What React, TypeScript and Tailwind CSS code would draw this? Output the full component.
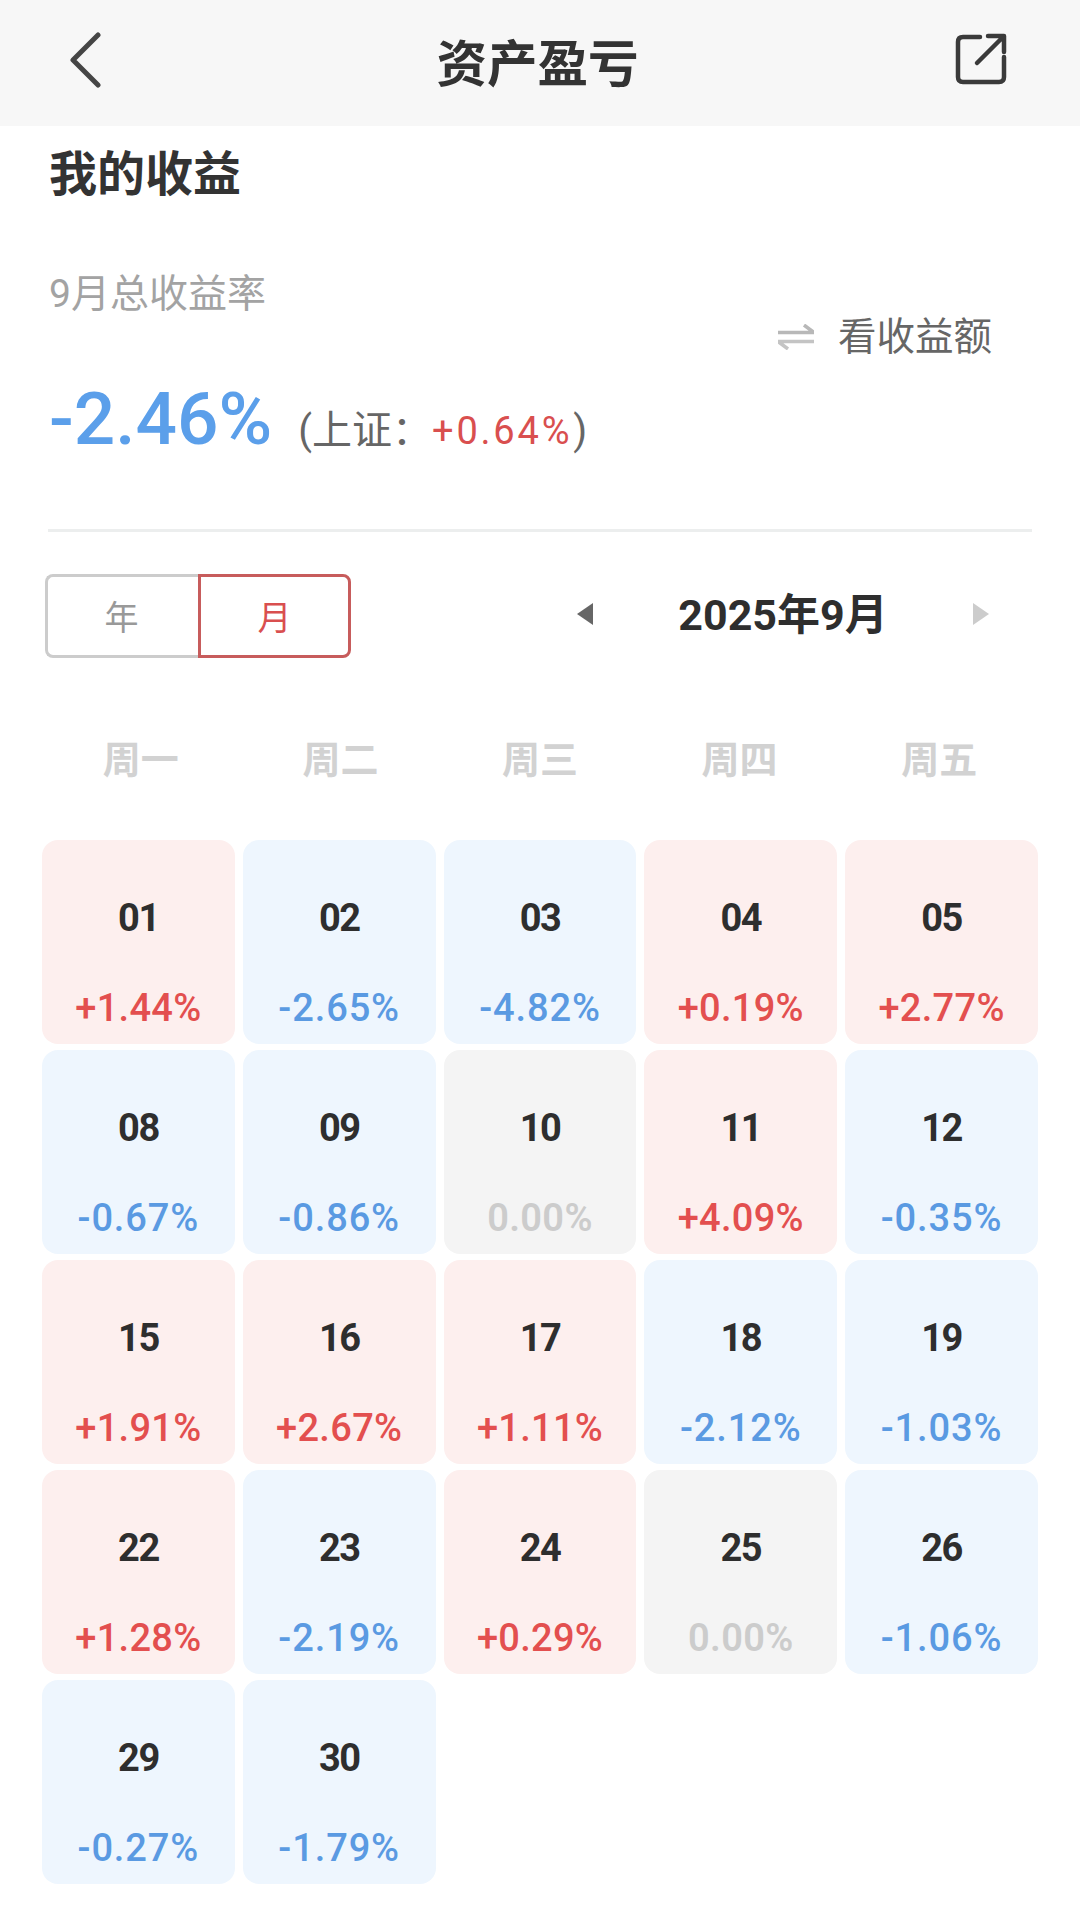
const font = { fontFamily: 'Roboto, "Noto Sans CJK SC", sans-serif' };

type Cell = [string, string];
const cells: Cell[] = [
  ['01', '+1.44%'], ['02', '-2.65%'], ['03', '-4.82%'], ['04', '+0.19%'], ['05', '+2.77%'],
  ['08', '-0.67%'], ['09', '-0.86%'], ['10', '0.00%'], ['11', '+4.09%'], ['12', '-0.35%'],
  ['15', '+1.91%'], ['16', '+2.67%'], ['17', '+1.11%'], ['18', '-2.12%'], ['19', '-1.03%'],
  ['22', '+1.28%'], ['23', '-2.19%'], ['24', '+0.29%'], ['25', '0.00%'], ['26', '-1.06%'],
  ['29', '-0.27%'], ['30', '-1.79%'],
];

function DayCell({ day, value }: { day: string; value: string }) {
  const up = value.startsWith('+');
  const down = value.startsWith('-');
  const bg = up ? 'bg-[#fdefee]' : down ? 'bg-[#eef6fe]' : 'bg-[#f4f4f4]';
  const text = up
    ? 'text-[#e34f4f] font-medium tracking-[0.3px]'
    : down
      ? 'text-[#5a9ae2] font-medium tracking-[0.9px]'
      : 'text-[#cccccc] font-semibold tracking-[0.3px]';
  return (
    <div className={`h-[204px] rounded-2xl flex flex-col items-center ${bg}`}>
      <div className="mt-[56px] h-[44px] leading-[44px] text-[38px] font-bold tracking-[-1.5px] text-[#2e2e2e]">{day}</div>
      <div className={`mt-[46px] h-[44px] leading-[44px] text-[38px] ${text}`}>{value}</div>
    </div>
  );
}

export default function App() {
  return (
    <div className="w-[1080px] h-[1917px] bg-white overflow-hidden" style={font}>
      <header className="h-[126px] bg-[#f7f7f7] flex items-center justify-between pl-[68px] pr-[73px]">
        <div className="w-[90px] h-[126px] flex items-center">
          <svg width="34" height="56" viewBox="0 0 34 56" fill="none" className="mb-[7px]">
            <path d="M29 3 L4 28 L29 53" transform="translate(1 0)" stroke="#454545" strokeWidth="5" strokeLinecap="round" strokeLinejoin="round" />
          </svg>
        </div>
        <h1 className="text-[50.5px] leading-[60px] font-bold text-[#333333] mt-[3px]">资产盈亏</h1>
        <div className="w-[90px] h-[126px] flex items-center justify-end">
          <svg width="52" height="52" viewBox="0 0 52 52" fill="none" className="mb-[8px]">
            <path d="M25 4 H8 Q3 4 3 9 V44 Q3 49 8 49 H44 Q49 49 49 44 V24" stroke="#3a3a3a" strokeWidth="4.5" strokeLinecap="round" />
            <path d="M22 30 L48 4 M33 3 H49 V19" stroke="#3a3a3a" strokeWidth="4.5" strokeLinecap="round" strokeLinejoin="round" />
          </svg>
        </div>
      </header>

      <div className="h-[98px] pl-[49px] flex items-center">
        <h2 className="text-[48px] leading-[60px] font-bold text-[#333333]">我的收益</h2>
      </div>

      <section className="mx-[48px] h-[308px] border-b-[3px] border-[#eceeee] flex justify-between">
        <div className="pl-px">
          <div className="mt-[46px] h-[48px] leading-[48px] text-[39px] text-[#a3a3a3]">9月总收益率</div>
          <div className="mt-[59px] flex items-baseline">
            <span className="text-[73px] leading-[84px] font-medium text-[#5b9fea]">-2.46%</span>
            <span className="ml-[26px] text-[40px] leading-[48px] text-[#666666]">
              (上证：<span className="text-[#d94f4f] text-[38px] tracking-[2.8px]">+0.64%</span><span className="ml-[1px]">)</span>
            </span>
          </div>
        </div>
        <div className="flex items-center h-[48px] mt-[89px] pr-[40px]">
          <svg width="36" height="26" viewBox="0 0 36 26" fill="none" className="mr-[24px]">
            <path d="M0 8.5 H36 L26 1" stroke="#b8b8b8" strokeWidth="3.5" />
            <path d="M36 17.5 H0 L10 25" stroke="#c4c4c4" strokeWidth="3.5" />
          </svg>
          <span className="text-[38.5px] leading-[48px] text-[#666666]">看收益额</span>
        </div>
      </section>

      <div className="mt-[42px] h-[84px] pl-[45px] flex items-center">
        <div className="w-[153px] h-[84px] flex items-center justify-center pt-[5px] pr-[3px] border-[3px] border-r-0 border-[#cccccc] rounded-l-[8px] text-[34px] text-[#999999]">年</div>
        <div className="w-[153px] h-[84px] flex items-center justify-center pt-[5px] border-[3px] border-[#c75c5c] rounded-r-[8px] text-[34px] text-[#d94f4f]">月</div>
        <svg width="16" height="22" viewBox="0 0 16 22" className="ml-[226px] mb-[4px]"><path d="M16 0 V22 L0 11 Z" fill="#666666" /></svg>
        <div className="w-[380px] text-center text-[43px] leading-[52px] font-bold text-[#2e2e2e] mb-[2px]">2025年9月</div>
        <svg width="16" height="22" viewBox="0 0 16 22" className="mb-[4px]"><path d="M0 0 V22 L16 11 Z" fill="#cccccc" /></svg>
      </div>

      <div className="mt-[72px] mx-[41px] h-[60px] grid grid-cols-5 items-center text-center text-[38px] font-bold text-[#d2d2d2]">
        {['周一', '周二', '周三', '周四', '周五'].map((d) => <div key={d}>{d}</div>)}
      </div>

      <div className="mt-[50px] mx-[42px] grid grid-cols-5 gap-x-[8px] gap-y-[6px]">
        {cells.map(([d, v]) => <DayCell key={d} day={d} value={v} />)}
      </div>
    </div>
  );
}
